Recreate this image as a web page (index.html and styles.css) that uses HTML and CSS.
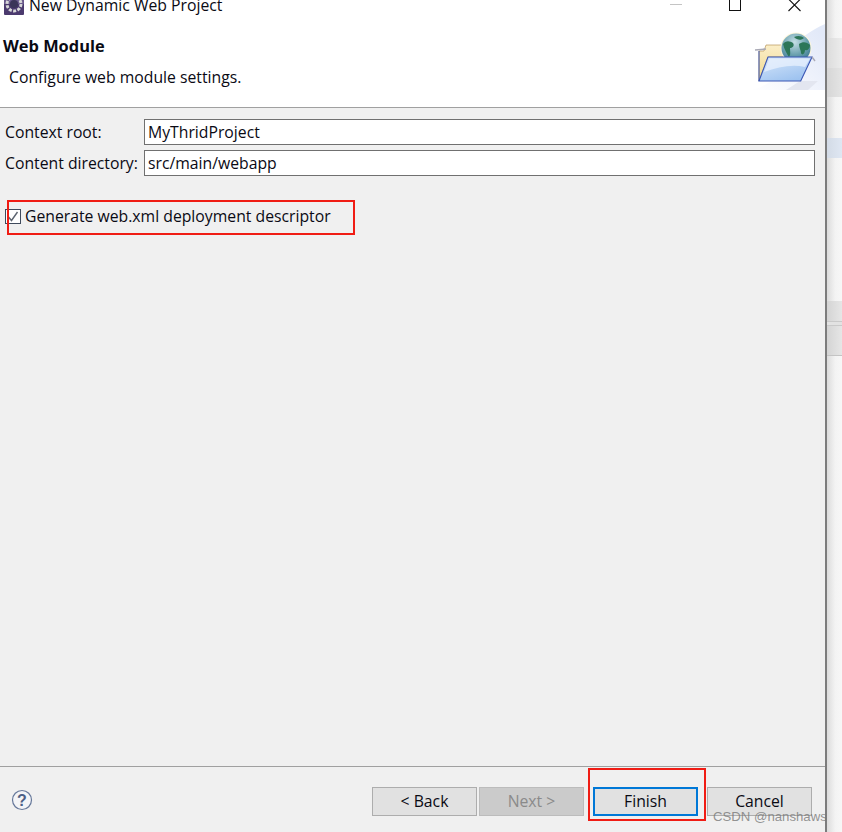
FILE: index.html
```html
<!DOCTYPE html>
<html lang="en">
<head>
<meta charset="utf-8">
<title>New Dynamic Web Project</title>
<link rel="stylesheet" href="styles.css">
</head>
<body>
<div class="screen">
  <main class="dialog">
    <header class="top">
      <div class="titlebar">
        <svg class="appicon" width="20" height="15" viewBox="0 0 20 15">
          <rect x="0" y="0" width="20" height="15" rx="1" fill="#4b3a6e"/>
          <rect x="0" y="0" width="20" height="4" fill="#6a5a8c"/>
          <circle cx="10" cy="4" r="7" fill="none" stroke="#d8d8d8" stroke-width="3" stroke-dasharray="3 1.4"/>
          <circle cx="10" cy="4" r="4" fill="#3b3558"/>
        </svg>
        <span class="title">New Dynamic Web Project</span>
        <div class="winctl">
          <span class="min"></span>
          <span class="max"></span>
          <svg width="15" height="12" viewBox="0 0 15 12"><path d="M1.5 -1 L13.5 11 M13.5 -1 L1.5 11" stroke="#111" stroke-width="1.1" fill="none"/></svg>
        </div>
      </div>
      <div class="banner">
        <div class="headtext">
          <h1>Web Module</h1>
          <p>Configure web module settings.</p>
        </div>
        <svg class="wizard" width="75" height="66" viewBox="0 0 75 66">
          <defs>
            <linearGradient id="sw" x1="0" y1="1" x2="1" y2="0.2">
              <stop offset="0" stop-color="#ffffff"/>
              <stop offset="0.5" stop-color="#f1f4fc"/>
              <stop offset="1" stop-color="#e2e9f8"/>
            </linearGradient>
            <linearGradient id="fr" x1="0" y1="0" x2="0.6" y2="1">
              <stop offset="0" stop-color="#d8e7fa"/>
              <stop offset="1" stop-color="#9ec3f0"/>
            </linearGradient>
            <linearGradient id="bk" x1="0" y1="0" x2="0" y2="1">
              <stop offset="0" stop-color="#fbeec8"/>
              <stop offset="1" stop-color="#f0d98f"/>
            </linearGradient>
            <radialGradient id="gl" cx="0.45" cy="0.3" r="0.8">
              <stop offset="0" stop-color="#c5dfe6"/>
              <stop offset="0.55" stop-color="#6aa0ae"/>
              <stop offset="1" stop-color="#2b6a88"/>
            </radialGradient>
          </defs>
          <path d="M0 66 C20 62 30 52 38 30 C48 14 62 6 75 0 L75 66 Z" fill="url(#sw)"/>
          <path d="M50 57 L68 57 L58 66 L36 66 Z" fill="#e3e6f0"/>
          <path d="M9 57 L9 27 L14 27 L16 21 L36 21 L36 33 L18 33 Z" fill="url(#bk)" stroke="#b8975a" stroke-width="0.7"/>
          <path d="M5 26 L16 25" stroke="#a9a9b5" stroke-width="1.6"/>
          <circle cx="46" cy="24" r="15.5" fill="#fdf6dc"/>
          <circle cx="46" cy="24" r="14.5" fill="url(#gl)"/>
          <path d="M33 20 C36 16 40 17 43 19 C45 22 42 24 40 24 C40 28 41 30 39 33 C37 30 34 25 33 20 Z M44 13 C48 11 52 12 54 14 C51 17 47 16 44 13 Z M49 20 C53 17 57 18 60 21 C60 25 57 27 55 26 C55 30 52 32 51 29 C51 26 49 24 49 20 Z" fill="#2c7658"/>
          <path d="M18 33 L62 33 L50.7 57 L9 57 Z" fill="url(#fr)" stroke="#3a56b4" stroke-width="1.1"/>
          <path d="M19.5 34.5 L60 34.5 L55 43 C42 40 28 43 14 48 Z" fill="#eaf2fd" opacity=".75"/>
          <path d="M9 27 L9 57" stroke="#3a56b4" stroke-width="1"/>
          <path d="M62 33 L65 37" stroke="#a9a9b5" stroke-width="1.4"/>
        </svg>
      </div>
    </header>
    <section class="body">
      <div class="formgrid">
        <label class="lbl">Context root:</label>
        <div class="field">MyThridProject</div>
        <label class="lbl">Content directory:</label>
        <div class="field">src/main/webapp</div>
      </div>
      <div class="checkrow">
        <span class="check">
          <svg width="14" height="13" viewBox="0 0 14 13"><path d="M2.5 7 L5.5 10.5 L11.5 2" stroke="#5c6470" stroke-width="1.4" fill="none"/></svg>
        </span>
        <span class="checklabel">Generate web.xml deployment descriptor</span>
        <span class="mark mark-check"></span>
      </div>
    </section>
    <footer class="foot">
      <svg class="help" width="22" height="22" viewBox="0 0 22 22">
        <circle cx="11" cy="11" r="9.5" fill="#f3f4f7" stroke="#66789a" stroke-width="1.2"/>
        <text x="11" y="16.5" text-anchor="middle" class="helpq">?</text>
      </svg>
      <div class="buttons">
        <button class="btn">&lt; Back</button>
        <button class="btn off">Next &gt;</button>
        <button class="btn primary">Finish</button>
        <button class="btn">Cancel</button>
      </div>
      <span class="mark mark-finish"></span>
    </footer>
  </main>
  <aside class="strip">
    <div class="s1"></div>
    <div class="s2"></div>
    <div class="s3"></div>
    <div class="s4"></div>
    <div class="s5"></div>
    <div class="s6"></div>
    <div class="s7"></div>
    <div class="s8"></div>
    <div class="s9"></div>
    <div class="s10"></div>
  </aside>
  <span class="watermark">CSDN @nanshaws</span>
</div>
</body>
</html>
```
FILE: styles.css
```css
* { box-sizing: border-box; }
html, body { margin: 0; padding: 0; }
body {
  width: 842px;
  height: 832px;
  overflow: hidden;
  font-family: "Open Sans", "Noto Sans", sans-serif;
  font-size: 15.75px;
  color: #0a0a14;
  background: #f0f0f0;
}
.screen {
  position: relative;
  display: flex;
  width: 842px;
  height: 832px;
}
.dialog {
  width: 827px;
  height: 832px;
  display: flex;
  flex-direction: column;
  background: #f0f0f0;
  border-right: 2px solid #7c7c7c;
}
.top {
  height: 108px;
  background: #fff;
  border-bottom: 1px solid #a0a0a0;
  flex: none;
}
.titlebar {
  height: 15px;
  display: flex;
  align-items: flex-end;
  position: relative;
}
.appicon { margin: 0 5px 0 4px; flex: none; }
.title {
  line-height: 20px;
  height: 20px;
  margin-top: -5px;
  white-space: nowrap;
}
.winctl {
  margin-left: auto;
  display: flex;
  align-items: flex-start;
  align-self: flex-start;
  height: 12px;
  padding-right: 23px;
}
.min {
  width: 12px;
  height: 1px;
  margin-top: 4px;
  background: #c4c4c4;
}
.max {
  width: 12px;
  height: 11px;
  margin-left: 47px;
  margin-right: 46px;
  border: 1px solid #111;
  border-top: 0;
}
.banner {
  display: flex;
  justify-content: space-between;
  height: 92px;
}
.headtext { padding: 20px 0 0 3px; }
h1 {
  margin: 0;
  font-size: 16.4px;
  font-weight: 700;
  line-height: 22px;
}
p {
  margin: 9px 0 0 6px;
  line-height: 22px;
}
.wizard { flex: none; margin-top: 9px; display: block; }
.body {
  flex: 1;
  padding: 11px 10px 0 5px;
}
.formgrid {
  display: grid;
  grid-template-columns: 139px 1fr;
  row-gap: 5px;
  align-items: center;
}
.lbl { line-height: 26px; white-space: nowrap; }
.field {
  height: 26px;
  line-height: 25px;
  border: 1px solid #707070;
  background: #fff;
  padding-left: 3px;
  white-space: nowrap;
}
.checkrow {
  position: relative;
  display: flex;
  align-items: center;
  margin-top: 33px;
  height: 16px;
}
.check {
  width: 16px;
  height: 15px;
  margin-top: -1px;
  border: 1px solid #3f4a5c;
  background: #fff;
  display: flex;
  align-items: center;
  justify-content: center;
  flex: none;
}
.checklabel { margin: -2px 0 0 4px; white-space: nowrap; line-height: 14px; }
.mark {
  position: absolute;
  border: 2px solid #f01c14;
  pointer-events: none;
}
.mark-check {
  left: 2px;
  top: -9px;
  width: 348px;
  height: 35px;
}
.foot {
  position: relative;
  height: 66px;
  flex: none;
  border-top: 1px solid #a0a0a0;
  display: flex;
  justify-content: space-between;
  padding: 20px 13px 0 11px;
}
.help { margin-top: 2px; flex: none; }
.helpq {
  font-family: "Liberation Sans", sans-serif;
  font-size: 16px;
  font-weight: 700;
  fill: #4c5f85;
}
.buttons { display: flex; height: 29px; }
.btn {
  width: 105px;
  height: 29px;
  padding: 0;
  font: inherit;
  line-height: 25px;
  color: #0a0a14;
  background: #e1e1e1;
  border: 1px solid #adadad;
}
.btn + .btn { margin-left: 2px; }
.off { background: #cbcbcb; color: #8a8a8a; border-color: #bcbcbc; }
.primary { border: 2px solid #0078d7; margin-left: 9px !important; }
.primary + .btn { margin-left: 9px; }
.mark-finish {
  left: 588px;
  top: 1px;
  width: 118px;
  height: 53px;
}
.strip {
  width: 15px;
  height: 832px;
  display: flex;
  flex-direction: column;
  background: linear-gradient(90deg, #dcdcdc, #f3f3f3 55%, #f7f7f7);
}
.s1 { height: 38px; }
.s2 { height: 30px; background: linear-gradient(90deg, #dcdcdc, #ececec); }
.s3 { height: 29px; background: linear-gradient(90deg, #d6d6d6, #e4e4e4); }
.s4 { height: 41px; }
.s5 { height: 20px; background: linear-gradient(90deg, #d3dbe6, #dfe7f3); }
.s6 { height: 143px; }
.s7 { height: 20px; background: linear-gradient(90deg, #d4d4d4, #e6e6e6); }
.s8 { height: 5px; border-top: 1px solid #c9c9c9; border-bottom: 1px solid #c9c9c9; background: #e2e2e2; }
.s9 { height: 30px; background: linear-gradient(90deg, #d4d4d4, #e6e6e6); border-bottom: 1px solid #c4c4c4; }
.s10 { flex: 1; }
.watermark {
  position: absolute;
  left: 713px;
  top: 809px;
  font-family: "Liberation Sans", sans-serif;
  font-size: 13.2px;
  line-height: 16px;
  color: rgba(120, 120, 120, 0.8);
  white-space: nowrap;
}
```
